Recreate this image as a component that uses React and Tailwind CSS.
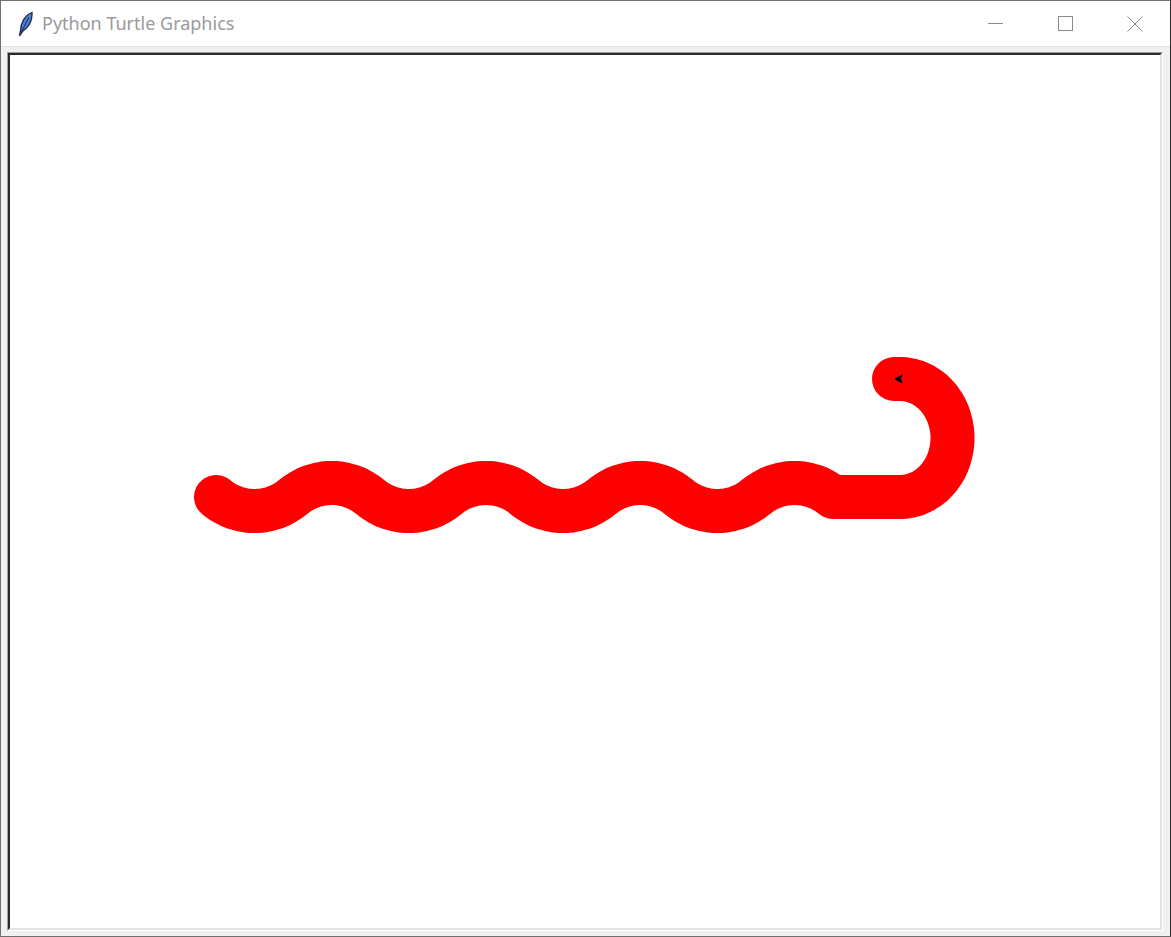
import React from 'react'

// tiny turtle so the snake follows the same arcs as tk's turtle
function snakePoints() {
  let x = 216
  let y = 497
  let h = -40
  const pts = [[x, y]]
  const rad = (a) => (a * Math.PI) / 180
  const go = (d) => {
    x += d * Math.cos(rad(h))
    y -= d * Math.sin(rad(h))
    pts.push([x, y])
  }
  const circle = (r, ext) => {
    const steps = 3 * (1 + Math.floor((Math.min(11 + Math.abs(r) / 6, 59) * Math.abs(ext)) / 360))
    let w = ext / steps
    let w2 = w / 2
    let l = 2 * r * Math.sin(rad(w2))
    if (r < 0) {
      l = -l
      w = -w
      w2 = -w2
    }
    h += w2
    for (let i = 0; i < steps; i++) {
      go(l)
      h += w
    }
    h -= w2
  }

  for (let i = 0; i < 4; i++) {
    circle(60, 80)
    circle(-60, 80)
  }
  h = 0
  go(900 - x)
  const start = pts.length
  circle(59, 180)
  for (let i = start; i < pts.length; i++) pts[i][0] = 900 + (pts[i][0] - 900) * 0.89
  x = pts[pts.length - 1][0]
  y = pts[pts.length - 1][1]
  go(6)
  return pts
}

function Feather() {
  return (
    <svg width="16" height="26" viewBox="0 0 16 26">
      <path d="M2.5 25 L3.5 20 C3.5 12 8 4 15 1.5 C15.5 9 12 16 6 20 Z" fill="#4a7fd8" stroke="#1c2a4a" strokeWidth="1.3" />
      <path d="M3 24 L12 6" stroke="#1c2a4a" strokeWidth="1" />
    </svg>
  )
}

export default function App() {
  const pts = snakePoints()
  const d = pts.map((p, i) => (i ? 'L' : 'M') + p[0].toFixed(1) + ' ' + p[1].toFixed(1)).join(' ')
  const [tx, ty] = pts[pts.length - 1]

  return (
    <div className="flex h-[937px] w-[1171px] flex-col border border-[#707070] border-r-[#2b2b2b] bg-[#f0f0f0]" style={{ fontFamily: '"Noto Sans", "Segoe UI", sans-serif' }}>
      <div className="flex h-[46px] shrink-0 items-center border-b border-[#e3e3e3] bg-white">
        <div className="ml-[16px] flex w-[16px] items-center">
          <Feather />
        </div>
        <span className="ml-[9px] pb-[1px] text-[18px] text-[#9a9a9a]">Python Turtle Graphics</span>
        <div className="ml-auto flex h-full items-center">
          <div className="flex h-full w-[70px] items-center justify-center">
            <div className="h-px w-[15px] bg-[#8a8a8a]" />
          </div>
          <div className="flex h-full w-[70px] items-center justify-center">
            <div className="h-[15px] w-[15px] border border-[#8a8a8a]" />
          </div>
          <div className="flex h-full w-[70px] items-center justify-center">
            <svg width="16" height="16" viewBox="0 0 16 16">
              <path d="M0.5 0.5 L15.5 15.5 M15.5 0.5 L0.5 15.5" stroke="#8a8a8a" strokeWidth="1" />
            </svg>
          </div>
        </div>
      </div>

      <div className="flex flex-1 flex-col pb-[5px] pl-[6px] pr-[7px] pt-[5px]">
        <div className="flex flex-1 border border-[#a0a0a0] border-b-white border-r-white">
          <div className="flex-1 overflow-hidden border-2 border-[#2a2a2a] border-b-[#e3e3e3] border-r-[#e3e3e3] bg-white">
            <svg width="1150" height="873" viewBox="10 55 1150 873" className="block">
              <path d={d} fill="none" stroke="#ff0000" strokeWidth="44" strokeLinecap="round" strokeLinejoin="round" />
              <polygon
                points={`${tx},${ty} ${tx + 9},${ty - 5} ${tx + 7},${ty} ${tx + 9},${ty + 5}`}
                fill="#000"
              />
            </svg>
          </div>
        </div>
      </div>
    </div>
  )
}
